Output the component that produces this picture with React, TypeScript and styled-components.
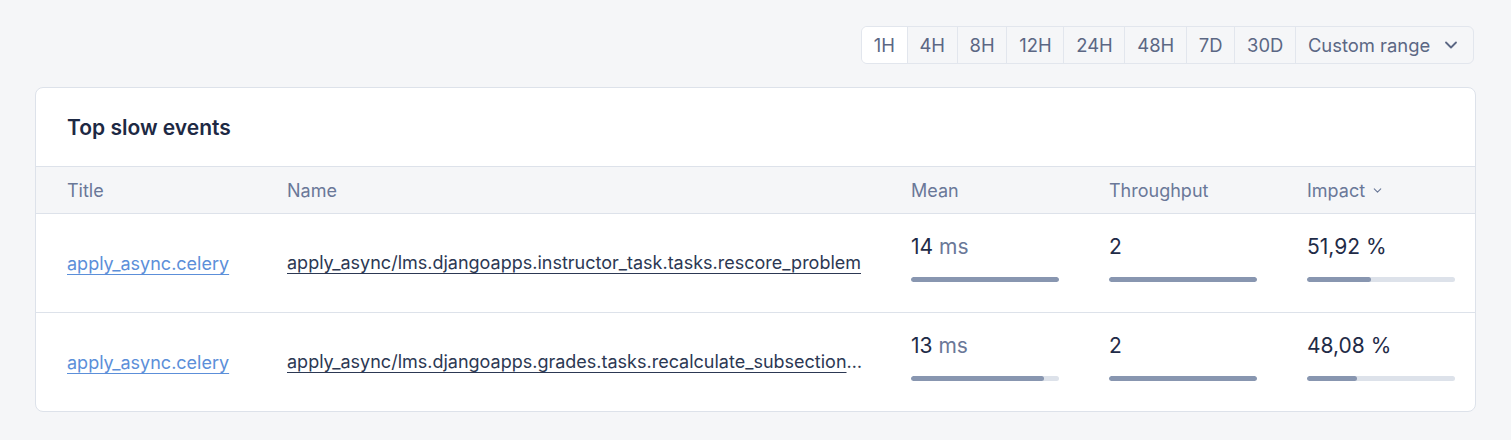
import React from "react";
import styled, { createGlobalStyle } from "styled-components";

const GlobalStyle = createGlobalStyle`
  html, body { margin: 0; padding: 0; background: #f5f6f8; }
  body { font-family: Inter, "Noto Sans", "Liberation Sans", sans-serif; -webkit-font-smoothing: antialiased; }
  * { box-sizing: border-box; }
`;

const Page = styled.div`
  padding: 26px 35px 28px 35px;
  display: flex;
  flex-direction: column;
  gap: 23px;
`;

const Toolbar = styled.div`
  display: flex;
  justify-content: flex-end;
  padding-right: 2px;
`;

const RangeGroup = styled.div`
  display: flex;
  height: 38px;
  border: 1px solid #e2e6ed;
  border-radius: 6px;
  overflow: hidden;
  background: #f5f6f8;
`;

const RangeButton = styled.button<{ $active?: boolean }>`
  display: flex;
  align-items: center;
  gap: 11px;
  height: 100%;
  padding: 0 11.8px;
  border: 0;
  border-left: 1px solid #e2e6ed;
  background: ${(p) => (p.$active ? "#ffffff" : "transparent")};
  color: #5b6784;
  font-family: inherit;
  font-size: 18.4px;
  cursor: pointer;
  &:first-child { border-left: 0; }
`;

const Card = styled.div`
  background: #fff;
  border: 1px solid #dde2ea;
  border-radius: 8px;
  overflow: hidden;
`;

const CardHeader = styled.div`
  height: 79px;
  display: flex;
  align-items: center;
  padding-left: 31px;
  border-bottom: 1px solid #dde2ea;
`;

const Heading = styled.h2`
  margin: 0;
  font-size: 21px;
  font-weight: 600;
  color: #1d2944;
`;

const Grid = styled.div`
  display: grid;
  grid-template-columns: 220px 624px 198px 198px 1fr;
  padding-left: 31px;
`;

const HeadRow = styled(Grid)`
  height: 47px;
  align-items: center;
  background: #f5f6f8;
  border-bottom: 1px solid #dde2ea;
`;

const HeadCell = styled.div`
  display: flex;
  align-items: center;
  gap: 6px;
  font-size: 18px;
  color: #6a7898;
`;

const Row = styled(Grid)<{ $last?: boolean }>`
  height: ${(p) => (p.$last ? "98px" : "99px")};
  border-bottom: ${(p) => (p.$last ? "0" : "1px solid #dde2ea")};
`;

const LinkCell = styled.div`
  display: flex;
  align-items: center;
  min-width: 0;
`;

const TitleLink = styled.a`
  font-size: 18px;
  color: #5c8fd9;
  text-decoration: underline;
  text-underline-offset: 4px;
  text-decoration-thickness: 1px;
`;

const NameLink = styled.a`
  display: block;
  max-width: 577px;
  font-size: 18px;
  line-height: 28px;
  color: #2c3853;
  text-decoration: underline;
  text-underline-offset: 4px;
  text-decoration-thickness: 1px;
  white-space: nowrap;
  overflow: hidden;
  text-overflow: ellipsis;
`;

const MetricCell = styled.div`
  display: flex;
  flex-direction: column;
  gap: 18px;
  padding-top: 21px;
`;

const Value = styled.div`
  font-size: 21px;
  line-height: 24px;
  color: #1f2b47;
`;

const Unit = styled.span`
  color: #6a7898;
`;

const Track = styled.div`
  width: 148px;
  height: 5px;
  border-radius: 3px;
  background: #dde2ea;
  overflow: hidden;
`;

const Fill = styled.div`
  height: 100%;
  border-radius: 3px;
  background: #8896b0;
`;

const Chevron = ({ size, stroke }: { size: number; stroke: number }) => (
  <svg width={size} height={size} viewBox="0 0 24 24" fill="none" stroke="currentColor" strokeWidth={stroke} strokeLinecap="round" strokeLinejoin="round">
    <path d="M6 9l6 6 6-6" />
  </svg>
);

const ranges = ["1H", "4H", "8H", "12H", "24H", "48H", "7D", "30D"];

const rows = [
  {
    title: "apply_async.celery",
    name: "apply_async/lms.djangoapps.instructor_task.tasks.rescore_problem",
    mean: 14,
    meanPct: 100,
    tp: 2,
    tpPct: 100,
    impact: "51,92 %",
    impactPct: 43,
  },
  {
    title: "apply_async.celery",
    name: "apply_async/lms.djangoapps.grades.tasks.recalculate_subsection_grade_v3",
    mean: 13,
    meanPct: 90,
    tp: 2,
    tpPct: 100,
    impact: "48,08 %",
    impactPct: 34,
  },
];

export default function App() {
  return (
    <>
      <GlobalStyle />
      <Page>
        <Toolbar>
          <RangeGroup>
            {ranges.map((r, i) => (
              <RangeButton key={r} $active={i === 0}>
                {r}
              </RangeButton>
            ))}
            <RangeButton>
              Custom range
              <Chevron size={20} stroke={2.2} />
            </RangeButton>
          </RangeGroup>
        </Toolbar>
        <Card>
          <CardHeader>
            <Heading>Top slow events</Heading>
          </CardHeader>
          <HeadRow>
            <HeadCell>Title</HeadCell>
            <HeadCell>Name</HeadCell>
            <HeadCell>Mean</HeadCell>
            <HeadCell>Throughput</HeadCell>
            <HeadCell>
              Impact
              <Chevron size={13} stroke={2} />
            </HeadCell>
          </HeadRow>
          {rows.map((r, i) => (
            <Row key={i} $last={i === rows.length - 1}>
              <LinkCell>
                <TitleLink href="#">{r.title}</TitleLink>
              </LinkCell>
              <LinkCell>
                <NameLink href="#">{r.name}</NameLink>
              </LinkCell>
              <MetricCell>
                <Value>
                  {r.mean} <Unit>ms</Unit>
                </Value>
                <Track>
                  <Fill style={{ width: `${r.meanPct}%` }} />
                </Track>
              </MetricCell>
              <MetricCell>
                <Value>{r.tp}</Value>
                <Track>
                  <Fill style={{ width: `${r.tpPct}%` }} />
                </Track>
              </MetricCell>
              <MetricCell>
                <Value>{r.impact}</Value>
                <Track>
                  <Fill style={{ width: `${r.impactPct}%` }} />
                </Track>
              </MetricCell>
            </Row>
          ))}
        </Card>
      </Page>
    </>
  );
}
